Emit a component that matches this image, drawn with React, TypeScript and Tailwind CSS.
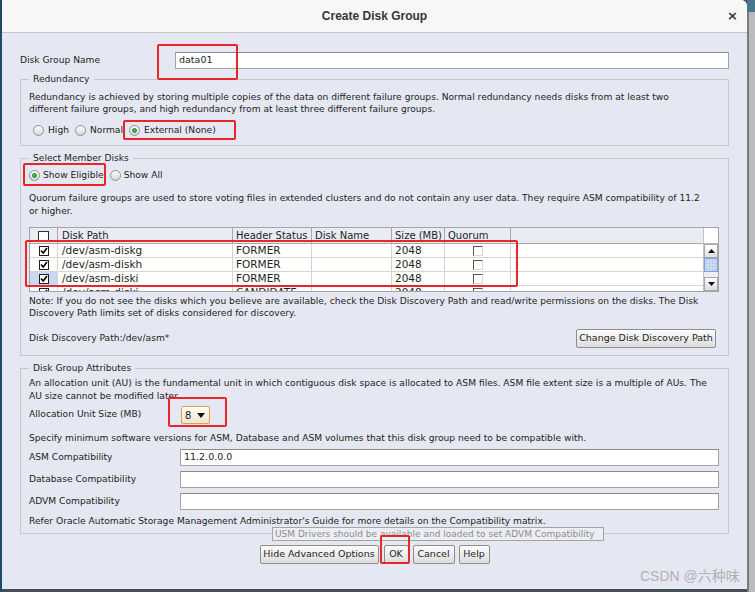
import React from 'react';

const Radio = ({ checked }: { checked?: boolean }) => (
  <span className="w-[11px] h-[11px] shrink-0 rounded-full border border-[#8f8f8f] bg-gradient-to-b from-white to-[#d6d6d6] flex items-center justify-center">
    {checked && <span className="w-[5px] h-[5px] rounded-full bg-[#43b043] border border-[#2f8c2f]" />}
  </span>
);

const CheckBox = ({ checked }: { checked?: boolean }) => (
  <span className="w-[10px] h-[10px] border border-[#202020] bg-white flex items-center justify-center">
    {checked && (
      <svg width="8" height="8" viewBox="0 0 8 8">
        <path d="M1 3.5 L3.2 6 L7 1" fill="none" stroke="#000" strokeWidth="1.6" />
      </svg>
    )}
  </span>
);

const Button = ({ label, w }: { label: string; w: string }) => (
  <button className={`${w} h-[19px] rounded-[2px] border border-[#8d8d8d] bg-gradient-to-b from-[#fdfdfd] to-[#dcdcdc] text-[9.5px] text-[#1e1e1e] flex items-center justify-center`}>
    {label}
  </button>
);

const TextField = ({ value }: { value?: string }) => (
  <div className="flex-1 h-[17px] border border-[#a3a3a3] border-t-[#8a8a8a] bg-white pl-[3px] flex items-center text-[9.5px] text-[#1e1e1e]">
    {value}
  </div>
);

const rows = [
  { path: '/dev/asm-diskg', status: 'FORMER', size: '2048', sel: false },
  { path: '/dev/asm-diskh', status: 'FORMER', size: '2048', sel: false },
  { path: '/dev/asm-diski', status: 'FORMER', size: '2048', sel: true },
  { path: '/dev/asm-diskj', status: 'CANDIDATE', size: '2048', sel: false },
];

const cols = 'grid grid-cols-[28px_175px_79px_80px_53px_66px_1fr]';

const App: React.FC = () => {
  return (
    <div className="relative w-[755px] h-[592px] overflow-hidden bg-[#444e57] flex font-['DejaVu_Sans',sans-serif] text-[#1e1e1e]">
      <div className="w-[2px] bg-[#1f4a69]" />

      <div className="w-[745px] h-[589px] bg-[#e5e8f2] rounded-tr-[6px] flex flex-col">
        {/* title bar */}
        <div className="h-[33px] shrink-0 bg-[#f7f7f7] rounded-tr-[6px] border-b border-[#c6c6c6] grid grid-cols-[40px_1fr_40px] items-center">
          <div />
          <div className="text-center font-['Liberation_Sans',sans-serif] font-bold text-[12px] text-[#363636]">Create Disk Group</div>
          <div className="flex justify-end pr-[9px] text-[13px] font-bold text-[#333]">×</div>
        </div>

        <div className="px-[18px] flex flex-col text-[9.15px] whitespace-nowrap">
          <div className="mt-[19px] h-[17px] flex items-center">
            <span className="w-[155px]">Disk Group Name</span>
            <TextField value="data01" />
          </div>

          {/* Redundancy */}
          <fieldset className="mt-[4px] border border-[#c6c8cc] pl-[8px] pr-[9px] pb-[8px]">
            <legend className="ml-0 px-[4px] leading-[13px]">Redundancy</legend>
            <p className="mt-[5px] leading-[12px]">
              Redundancy is achieved by storing multiple copies of the data on different failure groups. Normal redundancy needs disks from at least two
              <br />
              different failure groups, and high redundancy from at least three different failure groups.
            </p>
            <div className="mt-[9px] h-[13px] ml-[4px] flex items-center gap-[6px]">
              <span className="flex items-center gap-[4px]"><Radio /><span>High</span></span>
              <span className="flex items-center gap-[4px]"><Radio /><span>Normal</span></span>
              <span className="flex items-center gap-[4px]"><Radio checked /><span>External (None)</span></span>
            </div>
          </fieldset>

          {/* Select Member Disks */}
          <fieldset className="mt-[6px] border border-[#c6c8cc] pl-[8px] pr-[9px] pb-[7px]">
            <legend className="px-[4px] leading-[13px]">Select Member Disks</legend>
            <div className="mt-[4px] h-[13px] flex items-center gap-[6px]">
              <span className="flex items-center gap-[3px]"><Radio checked /><span>Show Eligible</span></span>
              <span className="flex items-center gap-[3px]"><Radio /><span>Show All</span></span>
            </div>
            <p className="mt-[10px] leading-[13px]">
              Quorum failure groups are used to store voting files in extended clusters and do not contain any user data. They require ASM compatibility of 11.2
              <br />
              or higher.
            </p>

            {/* table */}
            <div className="mt-[9px] h-[65px] border border-[#a4a4a4] flex bg-[#e9ecf5]">
              <div className="flex-1 flex flex-col">
                <div className={`${cols} h-[16px] shrink-0 border-b border-[#a8a8a8] text-[10px]`}>
                  <div className="border-r border-[#a8a8a8] flex items-center justify-center">
                    <span className="w-[11px] h-[11px] border border-[#303030] bg-white" />
                  </div>
                  <div className="border-r border-[#a8a8a8] pl-[4px] leading-[16px]">Disk Path</div>
                  <div className="border-r border-[#a8a8a8] pl-[3px] leading-[16px]">Header Status</div>
                  <div className="border-r border-[#a8a8a8] pl-[3px] leading-[16px]">Disk Name</div>
                  <div className="border-r border-[#a8a8a8] pl-[3px] leading-[16px]">Size (MB)</div>
                  <div className="border-r border-[#a8a8a8] pl-[3px] leading-[16px]">Quorum</div>
                  <div />
                </div>
                <div className="flex-1 overflow-hidden bg-white text-[10.5px]">
                  {rows.map((r) => (
                    <div key={r.path} className={`${cols} h-[14px] border-b border-[#d6d6ce]`}>
                      <div className={`border-r border-[#d6d6ce] flex items-center justify-center ${r.sel ? 'bg-[#c8d8f0]' : ''}`}>
                        <CheckBox checked />
                      </div>
                      <div className="border-r border-[#d6d6ce] pl-[4px] leading-[13px]">{r.path}</div>
                      <div className="border-r border-[#d6d6ce] pl-[3px] leading-[13px]">{r.status}</div>
                      <div className="border-r border-[#d6d6ce]" />
                      <div className="border-r border-[#d6d6ce] pl-[3px] leading-[13px]">{r.size}</div>
                      <div className="border-r border-[#d6d6ce] flex items-center justify-center">
                        <span className="w-[10px] h-[10px] border border-[#d8d8d8] border-t-[#555] border-l-[#555] bg-white" />
                      </div>
                      <div />
                    </div>
                  ))}
                </div>
              </div>
              {/* scrollbar */}
              <div className="w-[15px] flex flex-col border-l border-[#c4c4c4]">
                <div className="h-[16px] bg-white border-b border-[#b8b8b8]" />
                <div className="flex-1 bg-[#eceef3] flex flex-col">
                  <div className="h-[14px] border border-[#a8a8a8] bg-gradient-to-b from-white to-[#dedede] flex items-center justify-center">
                    <svg width="7" height="4" viewBox="0 0 7 4"><path d="M0 4 L3.5 0 L7 4Z" fill="#111" /></svg>
                  </div>
                  <div className="h-[14px] border border-[#7d9fd6] bg-[#c9daf3] bg-[radial-gradient(#9fb6dc_0.6px,transparent_0.8px)] bg-[length:3px_3px]" />
                  <div className="flex-1" />
                  <div className="h-[14px] border border-[#a8a8a8] bg-gradient-to-b from-white to-[#dedede] flex items-center justify-center">
                    <svg width="7" height="4" viewBox="0 0 7 4"><path d="M0 0 L7 0 L3.5 4Z" fill="#111" /></svg>
                  </div>
                </div>
              </div>
            </div>

            <p className="mt-[3px] leading-[12px]">
              Note: If you do not see the disks which you believe are available, check the Disk Discovery Path and read/write permissions on the disks. The Disk
              <br />
              Discovery Path limits set of disks considered for discovery.
            </p>
            <div className="mt-[10px] h-[19px] flex items-center justify-between">
              <span>Disk Discovery Path:/dev/asm*</span>
              <span className="mr-[3px]"><Button label="Change Disk Discovery Path" w="w-[140px]" /></span>
            </div>
          </fieldset>

          {/* Disk Group Attributes */}
          <fieldset className="mt-[6px] border border-[#c6c8cc] pl-[8px] pr-[9px] pb-[5px]">
            <legend className="px-[4px] leading-[13px]">Disk Group Attributes</legend>
            <p className="mt-[2px] leading-[13px]">
              An allocation unit (AU) is the fundamental unit in which contiguous disk space is allocated to ASM files. ASM file extent size is a multiple of AUs. The
              <br />
              AU size cannot be modified later.
            </p>
            <div className="mt-[3px] h-[18px] flex items-center">
              <span className="w-[152px]">Allocation Unit Size (MB)</span>
              <div className="w-[29px] h-[18px] rounded-[2px] border border-[#d8a24a] bg-gradient-to-b from-[#fffdf6] to-[#efe6cf] flex items-center justify-between pl-[3px] pr-[4px] text-[10px]">
                <span>8</span>
                <svg width="8" height="5" viewBox="0 0 8 5"><path d="M0 0 L8 0 L4 5Z" fill="#111" /></svg>
              </div>
            </div>
            <p className="mt-[8px] leading-[13px]">
              Specify minimum software versions for ASM, Database and ASM volumes that this disk group need to be compatible with.
            </p>
            <div className="mt-[4px] h-[17px] flex items-center">
              <span className="w-[151px]">ASM Compatibility</span>
              <TextField value="11.2.0.0.0" />
            </div>
            <div className="mt-[5px] h-[17px] flex items-center">
              <span className="w-[151px]">Database Compatibility</span>
              <TextField />
            </div>
            <div className="mt-[5px] h-[17px] flex items-center">
              <span className="w-[151px]">ADVM Compatibility</span>
              <TextField />
            </div>
            <p className="mt-[5px] leading-[13px]">
              Refer Oracle Automatic Storage Management Administrator's Guide for more details on the Compatibility matrix.
            </p>
          </fieldset>

          <div className="mt-[11px] flex justify-center gap-[4px]">
            <Button label="Hide Advanced Options" w="w-[119px]" />
            <span className="ml-[1px]"><Button label="OK" w="w-[25px]" /></span>
            <Button label="Cancel" w="w-[42px]" />
            <Button label="Help" w="w-[31px]" />
          </div>
        </div>
      </div>

      <div className="flex-1 flex flex-col">
        <div className="h-[12px] bg-[#47768f]" />
        <div className="flex-1 bg-[#b9bbbe] border-l-2 border-[#7a7d80]" />
      </div>

      {/* tooltip */}
      <div className="absolute left-[272px] top-[527px] w-[332px] h-[14px] border border-[#a4a4a4] bg-[#eceef4] text-[9px] text-[#8c8c8c] leading-[12px] pl-[2px] whitespace-nowrap">
        USM Drivers should be available and loaded to set ADVM Compatibility
      </div>

      {/* annotation boxes */}
      <div className="absolute left-[157px] top-[44px] w-[81px] h-[36px] border-2 border-[#e8262a] rounded-[2px]" />
      <div className="absolute left-[123px] top-[120px] w-[113px] h-[20px] border-2 border-[#e8262a] rounded-[2px]" />
      <div className="absolute left-[23px] top-[163px] w-[83px] h-[23px] border-2 border-[#e8262a] rounded-[2px]" />
      <div className="absolute left-[25px] top-[240px] w-[493px] h-[47px] border-2 border-[#e8262a] rounded-[2px]" />
      <div className="absolute left-[168px] top-[397px] w-[59px] h-[30px] border-2 border-[#e8262a] rounded-[2px]" />
      <div className="absolute left-[380px] top-[535px] w-[30px] h-[29px] border-2 border-[#e8262a] rounded-[2px]" />

      <div className="absolute left-[640px] top-[566px] text-[14px] text-[#a8a8a8]/90 font-['Liberation_Sans','Noto_Sans_CJK_SC',sans-serif]">
        CSDN @六种味
      </div>
    </div>
  );
};

export default App;
